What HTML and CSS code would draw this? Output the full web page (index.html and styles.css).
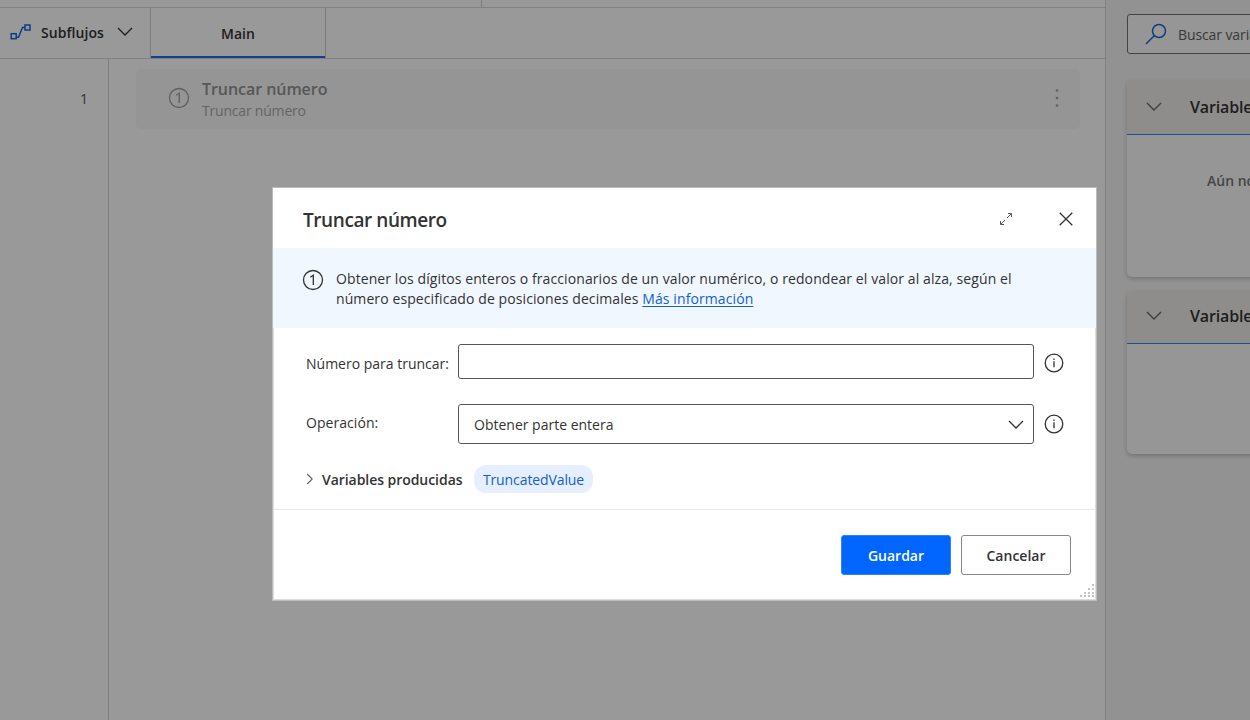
FILE: index.html
```html
<!DOCTYPE html>
<html lang="es">
<head>
  <meta charset="UTF-8" />
  <meta name="viewport" content="width=device-width, initial-scale=1.0"/>
  <title>Truncar número</title>
  <link rel="stylesheet" href="styles.css">
</head>
<body>
  <div class="app">
    <main class="workspace">
      <div class="toolbar"><div class="toolbar-left"></div></div>
      <div class="tabs">
        <div class="subflows">
          <svg width="22" height="18" viewBox="0 0 22 18" fill="none" stroke="#1a66dd" stroke-width="1.5">
            <rect x="1.2" y="10.7" width="5" height="5"/>
            <rect x="15" y="2" width="5" height="5"/>
            <path d="M6.5 14.2h2l4-9.7h2.5"/>
          </svg>
          <span class="subflows-text">Subflujos</span>
          <svg width="16" height="10" viewBox="0 0 16 10" fill="none" stroke="#333" stroke-width="1.3"><path d="M1 1l7 7 7-7"/></svg>
        </div>
        <div class="tab"><span>Main</span></div>
      </div>
      <div class="editor">
        <div class="gutter"><span>1</span></div>
        <div class="steps">
          <div class="step">
            <svg class="step-icon" width="22" height="22" viewBox="0 0 22 22" fill="none" stroke="#a0a0a0" stroke-width="1.3">
              <circle cx="11" cy="11" r="9.5"/><path d="M8.3 8.2l3-2v9.8"/>
            </svg>
            <div class="step-text">
              <div class="step-title">Truncar número</div>
              <div class="step-desc">Truncar número</div>
            </div>
            <svg class="dots" width="4" height="20" viewBox="0 0 4 20" fill="#a0a0a0">
              <circle cx="2" cy="2.5" r="1.3"/><circle cx="2" cy="10" r="1.3"/><circle cx="2" cy="17.5" r="1.3"/>
            </svg>
          </div>
        </div>
      </div>
    </main>
    <aside class="side">
      <div class="search">
        <svg width="22" height="22" viewBox="0 0 22 22" fill="none" stroke="#1a66dd" stroke-width="1.5"><circle cx="14" cy="8" r="6.5"/><path d="M9.2 12.8L1 21"/></svg>
        <span>Buscar variables</span>
      </div>
      <section class="panel panel-inputs">
        <div class="panel-head">
          <svg width="16" height="10" viewBox="0 0 16 10" fill="none" stroke="#666" stroke-width="1.4"><path d="M1 1l7 7 7-7"/></svg>
          <span>Variables de entrada o salida</span>
        </div>
        <div class="panel-body">Aún no hay variables</div>
      </section>
      <section class="panel panel-flow">
        <div class="panel-head">
          <svg width="16" height="10" viewBox="0 0 16 10" fill="none" stroke="#666" stroke-width="1.4"><path d="M1 1l7 7 7-7"/></svg>
          <span>Variables de flujo</span>
        </div>
        <div class="panel-body"></div>
      </section>
    </aside>
  </div>

  <div class="overlay">
    <div class="dialog">
      <header class="dialog-head">
        <h1>Truncar número</h1>
        <svg class="expand" width="14" height="14" viewBox="0 0 14 14" fill="none" stroke="#555" stroke-width="1">
          <path d="M8 6l4-4M9 1.5h3.5V5M6 8l-4 4M1.5 9v3.5H5"/>
        </svg>
        <svg width="14" height="14" viewBox="0 0 14 14" fill="none" stroke="#333" stroke-width="1.3"><path d="M.7.7l12.6 12.6M13.3.7L.7 13.3"/></svg>
      </header>
      <div class="banner">
        <svg width="22" height="22" viewBox="0 0 22 22" fill="none" stroke="#333" stroke-width="1.3">
          <circle cx="11" cy="11" r="9.5"/><path d="M8.3 8.2l3-2v9.8"/>
        </svg>
        <p>Obtener los dígitos enteros o fraccionarios de un valor numérico, o redondear el valor al alza, según el<br>
        número especificado de posiciones decimales <a href="#">Más información</a></p>
      </div>
      <div class="form">
        <div class="row row-number">
          <label for="number">Número para truncar:</label>
          <input id="number" class="field" type="text">
          <svg class="info" width="20" height="20" viewBox="0 0 20 20" fill="none" stroke="#333" stroke-width="1.3"><circle cx="10" cy="10" r="8.8"/><path d="M10 8.2v6M10 5.6v1.4"/></svg>
        </div>
        <div class="row row-operation">
          <label>Operación:</label>
          <div class="field select">
            <span>Obtener parte entera</span>
            <svg width="16" height="10" viewBox="0 0 16 10" fill="none" stroke="#333" stroke-width="1.3"><path d="M1 1l7 7 7-7"/></svg>
          </div>
          <svg class="info" width="20" height="20" viewBox="0 0 20 20" fill="none" stroke="#333" stroke-width="1.3"><circle cx="10" cy="10" r="8.8"/><path d="M10 8.2v6M10 5.6v1.4"/></svg>
        </div>
        <div class="produced">
          <svg width="8" height="12" viewBox="0 0 8 12" fill="none" stroke="#666" stroke-width="1.1"><path d="M1.2 1l5 5-5 5"/></svg>
          <span class="produced-text">Variables producidas</span>
          <span class="chip">TruncatedValue</span>
        </div>
      </div>
      <footer class="dialog-foot">
        <button class="btn btn-primary">Guardar</button>
        <button class="btn">Cancelar</button>
      </footer>
      <svg class="grip" width="14" height="14" viewBox="0 0 14 14" fill="#c4c4cc">
        <path d="M12 0h2v2h-2zM12 4h2v2h-2zM8 4h2v2H8zM12 8h2v2h-2zM8 8h2v2H8zM4 8h2v2H4zM12 11h2v2h-2zM8 11h2v2H8zM4 11h2v2H4zM0 11h2v2H0z"/>
      </svg>
    </div>
  </div>
</body>
</html>
```
FILE: styles.css
```css
* { box-sizing: border-box; }
body {
  margin: 0; width: 1250px; height: 720px; overflow: hidden;
  font-family: "Open Sans", "Noto Sans", sans-serif; font-size: 14px; color: #333;
}
svg { flex: none; display: block; }

.app { display: flex; width: 1250px; height: 720px; background: #fff; overflow: hidden; }
.workspace { display: flex; flex-direction: column; width: 1106px; flex: none; border-right: 1px solid #d2d2d2; }
.toolbar { height: 8px; border-bottom: 1px solid #d8d8d8; }
.toolbar-left { width: 482px; height: 7px; border-right: 1px solid #d0d0d0; }
.tabs { display: flex; height: 51px; border-bottom: 1px solid #d8d8d8; }
.subflows {
  display: flex; align-items: center; width: 151px;
  padding: 0 0 1px 10px; border-right: 1px solid #d0d0d0; font-weight: 600;
}
.subflows svg { margin-top: -1px; }
.subflows-text { width: 64px; margin: 0 12px 0 9px; white-space: nowrap; letter-spacing: .05px; }
.tab {
  display: flex; align-items: center; justify-content: center; width: 175px;
  border-right: 1px solid #d0d0d0; font-weight: 600;
  background: linear-gradient(#1c6cf0, #1c6cf0) bottom / 100% 2px no-repeat;
}
.editor { display: flex; flex: 1; }
.gutter { width: 109px; padding: 30px 20px 0 0; border-right: 1px solid #d0d0d0; text-align: right; color: #555; }
.steps { flex: 1; padding: 10px 25px 0 27px; }
.step {
  display: flex; align-items: center; height: 60px; padding: 0 21px 0 32px;
  background: #f8f8f8; border-radius: 5px;
}
.step-icon { margin-top: -2px; }
.step-text { flex: 1; margin: 1px 0 0 12px; color: #a8a8a8; }
.step-title { font-size: 16px; line-height: 22px; font-weight: 600; color: #929292; letter-spacing: -.05px; }
.step-desc { line-height: 22px; letter-spacing: -.2px; }
.dots { margin-top: -2px; }

.side { flex: 1; padding: 14px 0 0 21px; background: #f3f3f3; overflow: hidden; }
.search {
  display: flex; align-items: center; width: 300px; height: 40px; padding-left: 17px; gap: 11px;
  background: #fbfbfb; border: 1px solid #707070; border-radius: 3px; color: #606060; letter-spacing: -.1px;
}
.panel { width: 300px; border-radius: 5px; background: #fafafa; box-shadow: 0 2px 4px rgba(0,0,0,.2); overflow: hidden; }
.panel-inputs { height: 197px; margin-top: 26px; }
.panel-flow { height: 163px; margin-top: 14px; }
.panel-head {
  display: flex; align-items: center; gap: 28px; height: 55px; padding-left: 19px;
  background: #efecea; border-bottom: 1px solid #3580ee; font-size: 16px; font-weight: 600; white-space: nowrap;
  letter-spacing: -.15px;
}
.panel-flow .panel-head { height: 53px; padding-bottom: 2px; }
.panel-body { padding: 36px 0 0 80px; font-weight: 600; color: #757575; white-space: nowrap; }

.overlay {
  position: absolute; top: 0; left: 0; width: 1250px; height: 720px;
  padding: 187px 0 0 272px; background: rgba(0,0,0,.4);
}
.dialog {
  position: relative; display: flex; flex-direction: column; width: 825px; height: 414px;
  background: #fff; border: 1px solid #bbb;
}
.dialog-head { display: flex; align-items: center; height: 60px; padding: 0 23px 0 30px; }
.dialog-head h1 { flex: 1; margin: 4px 0 0; font-size: 19px; font-weight: 600; letter-spacing: -.42px; }
.dialog-head svg { margin-top: 1px; }
.dialog-head .expand { margin-right: 46px; }
.banner { display: flex; gap: 12px; height: 80px; padding: 21px 0 0 29px; background: #f1f7ff; }
.banner p { margin: 0; line-height: 20px; white-space: nowrap; letter-spacing: .095px; }
.banner a { color: #115fd0; text-underline-offset: 2px; }
.form {
  height: 182px; padding: 16px 0 0 32px;
  border-left: 1px solid #ddd; border-right: 1px solid #ddd; border-bottom: 1px solid #e8e8e6;
}
.row { display: flex; align-items: center; }
.row label { width: 152px; white-space: nowrap; }
.row-number label, .row-number .info { margin-top: 3px; }
.field { width: 576px; height: 35px; padding: 0 10px 0 15px; border: 1px solid #555; border-radius: 3px; background: #fff; }
.select { display: flex; align-items: center; justify-content: space-between; height: 40px; padding-right: 9px; }
.select svg { margin-top: 2px; }
.row-operation { margin-top: 25px; }
.row-operation label { margin-bottom: 4px; letter-spacing: .05px; }
.row-operation .info { margin-bottom: 1px; }
.info { margin-left: 10px; }
.produced { display: flex; align-items: center; height: 28px; margin-top: 21px; }
.produced-text { width: 141px; margin: 0 11px 0 8px; font-weight: 600; white-space: nowrap; letter-spacing: -.05px; }
.chip {
  width: 119px; height: 28px; border-radius: 12px; background: #e5efff; color: #115fd0;
  text-align: center; line-height: 29px; letter-spacing: -.1px;
}
.dialog-foot {
  display: flex; flex: 1; justify-content: flex-end; gap: 10px; padding: 25px 24px 0 0;
  border-left: 1px solid #ddd; border-right: 1px solid #ddd; border-bottom: 1px solid #ddd;
}
.btn {
  width: 110px; height: 40px; border: 1px solid #8a8886; border-radius: 3px; background: #fff;
  color: #333; font: 600 14px "Open Sans", sans-serif;
}
.btn-primary { background: #0066ff; border-color: #2b83ff; color: #fff; }
.grip { position: absolute; right: 2px; bottom: 2px; }
```
